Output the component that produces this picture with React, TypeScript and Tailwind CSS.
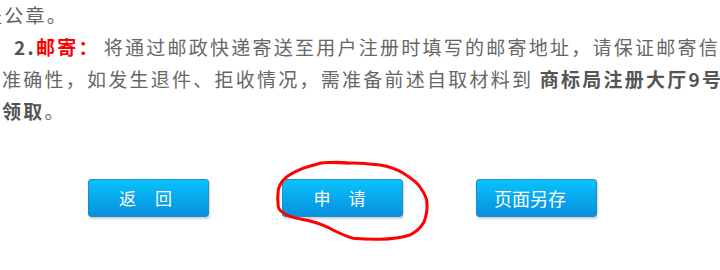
import React from "react";

const Btn = ({ children, className = "" }: { children: React.ReactNode; className?: string }) => (
  <button
    className={
      "flex h-[38px] w-[121px] items-center justify-center rounded-[3px] border border-[#1c8fc9] bg-gradient-to-b from-[#0ac2fd] to-[#0890dc] text-[17px] text-white shadow-[1px_2px_2px_rgba(0,0,0,0.18)] " +
      className
    }
  >
    {children}
  </button>
);

export default function App() {
  return (
    <div
      className="relative h-[270px] w-[720px] overflow-hidden bg-white text-[#666666]"
      style={{ fontFamily: '"Noto Sans CJK SC", "Noto Sans", sans-serif' }}
    >
      <div className="-mt-[1px] whitespace-nowrap pl-[2px] text-[19px] leading-[32px] tracking-[2.25px]">
        <div className="-ml-[19px]">盖公章。</div>
        <div className="pl-[12px]">
          <b className="text-[#555555]">2.</b>
          <b className="text-[#ff0000]">邮寄：</b>
          <span className="pl-[4px]">将通过邮政快递寄送至用户注册时填写的邮寄地址，请保证邮寄信息</span>
        </div>
        <div>
          准确性，如发生退件、拒收情况，需准备前述自取材料到{" "}
          <b className="text-[#555555]">商标局注册大厅9号窗口</b>
        </div>
        <div>
          <b className="text-[#555555]">领取</b>。
        </div>
      </div>

      <div className="mt-[52px] flex gap-[73px] pl-[88px]">
        <Btn>
          <span className="flex gap-[19px] pr-[6px]">
            <span>返</span>
            <span>回</span>
          </span>
        </Btn>
        <Btn>
          <span className="flex gap-[18px] pr-[6px]">
            <span>申</span>
            <span>请</span>
          </span>
        </Btn>
        <Btn>
          <span className="pr-[13px] text-[18px]">页面另存</span>
        </Btn>
      </div>

      <svg
        className="pointer-events-none absolute left-0 top-0"
        width="720"
        height="270"
        viewBox="0 0 720 270"
        fill="none"
      >
        <path
          d="M320 163 C332 162 340 162 347 162.7 C360 163 372 164 380 165 C392 167 398 170 403 173 C411 178 417 182 420 187 C425 194 427 198 427 203 C427.5 211 426 217 424 222 C420 229 416 232 410 235 C400 238 390 239 380 239.3 C370 239.5 361 239 353 238.3 C345 236 339 233 333 230 C326 226 318 223 310 221 C301 219 292 218 287 215 C281 212 279 210 278.3 206.7 C277.5 200 277.5 195 278.3 190 C279.5 184 282 181 285 178.3 C291 173 297 171 303 168.3 C310 166 316 164 323 162.7 C331 162 340 162.5 350 163.3"
          stroke="#ff0000"
          strokeWidth="3"
          strokeLinecap="round"
        />
      </svg>
    </div>
  );
}
